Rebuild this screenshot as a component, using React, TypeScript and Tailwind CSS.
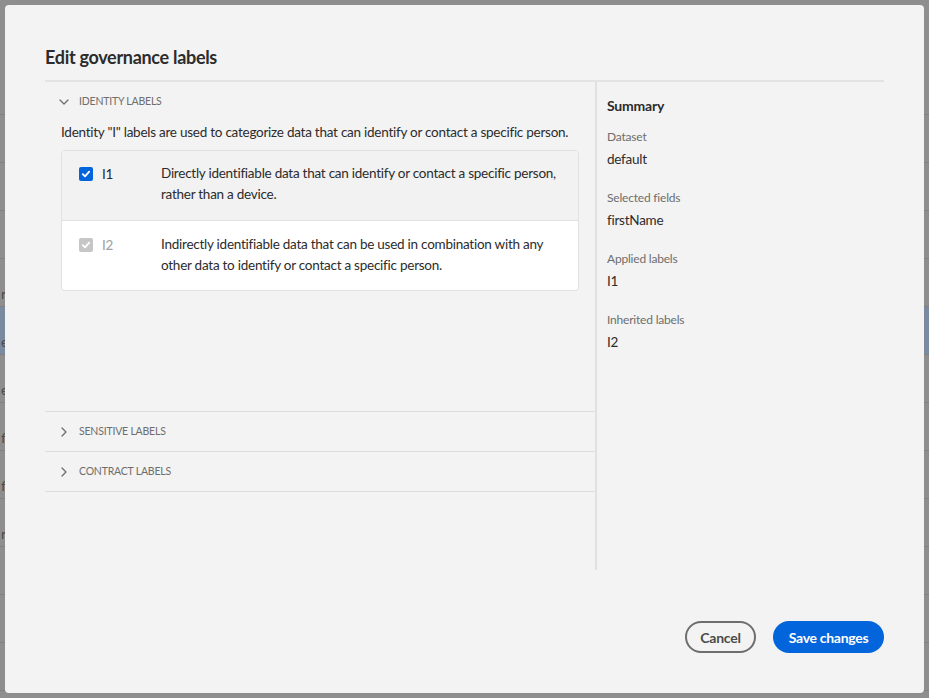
import React from 'react';

const bgRows = [
    { t: '', blue: false },
    { t: '', blue: false },
    { t: '', blue: false },
    { t: '', blue: false },
    { t: 'r', blue: false },
    { t: 'e', blue: true },
    { t: 'e', blue: false },
    { t: 'fi', blue: false },
    { t: 'fi', blue: false },
    { t: 'r', blue: false },
    { t: '', blue: false },
    { t: '', blue: false },
    { t: '', blue: false },
];

function ChevronDown() {
    return (
        <svg width="10" height="10" viewBox="0 0 10 10" fill="none">
            <path d="M1 3l4 4 4-4" stroke="#6e6e6e" strokeWidth="1.3" strokeLinecap="round" strokeLinejoin="round" />
        </svg>
    );
}

function ChevronRight() {
    return (
        <svg width="10" height="10" viewBox="0 0 10 10" fill="none">
            <path d="M3 1l4 4-4 4" stroke="#6e6e6e" strokeWidth="1.3" strokeLinecap="round" strokeLinejoin="round" />
        </svg>
    );
}

function Check({ disabled }: { disabled?: boolean }) {
    return (
        <span className={`flex h-[14px] w-[14px] shrink-0 items-center justify-center rounded-[2px] ${disabled ? 'bg-[#c6c6c6]' : 'bg-[#0265dc]'}`}>
            <svg width="10" height="10" viewBox="0 0 10 10" fill="none">
                <path d="M1.8 5.2l2.2 2.2 4.2-4.8" stroke="#fff" strokeWidth="1.8" strokeLinecap="round" strokeLinejoin="round" />
            </svg>
        </span>
    );
}

function SummaryItem({ label, value }: { label: string; value: string }) {
    return (
        <div className="mb-[18px]">
            <div className="text-[12px] leading-[20px] tracking-[-0.2px] text-[#6e6e6e]">{label}</div>
            <div className="mt-[1px] text-[13.5px] leading-[22px] tracking-[-0.25px] text-[#2c2c2c]">{value}</div>
        </div>
    );
}

function SectionHeader({ open, label }: { open?: boolean; label: string }) {
    return (
        <div className="flex h-[39px] items-center pl-[14px]">
            {open ? <ChevronDown /> : <ChevronRight />}
            <span className="ml-[10px] text-[10.5px] uppercase tracking-[-0.2px] text-[#6e6e6e]">{label}</span>
        </div>
    );
}

export default function App() {
    return (
        <div className="relative h-[698px] w-[929px] overflow-hidden bg-[#8e8e8e] font-['Lato',sans-serif]">
            {/* page behind the dialog */}
            <div className="h-[67px]" />
            {bgRows.map((r, i) => (
                <div
                    key={i}
                    className={`h-[48px] border-b border-[#808080] pt-[26px] pl-[1px] text-[14px] leading-[18px] text-[#4a4a4a] ${r.blue ? 'bg-[#7a8b9f]' : ''}`}
                >
                    {r.t}
                </div>
            ))}

            <div className="absolute left-[5px] top-[5px] flex h-[688px] w-[919px] flex-col rounded-[4px] bg-[#f3f3f3] px-[40px] pt-[40px] pb-[40px]">
                <h1 className="h-[24px] text-[18px] font-bold leading-[24px] tracking-[-0.3px] text-[#2c2c2c]">Edit governance labels</h1>
                <div className="mt-[11px] h-[2px] bg-[#e3e3e3]" />

                <div className="flex h-[488px]">
                    <div className="w-[550px]">
                        <div className="h-[330px] border-b border-[#dcdcdc]">
                            <SectionHeader open label="Identity labels" />
                            <div className="px-[16px] text-[13.5px] tracking-[-0.25px]">
                                <p className="leading-[22px] text-[#2c2c2c]">
                                    Identity "I" labels are used to categorize data that can identify or contact a specific person.
                                </p>
                                <div className="mt-[7px] overflow-hidden rounded-[4px] border border-[#e1e1e1] bg-white">
                                    <div className="flex h-[70px] border-b border-[#e1e1e1] bg-[#f2f2f2] pt-[12px] pl-[17px] pr-[18px]">
                                        <div className="mt-[4px]"><Check /></div>
                                        <span className="ml-[9px] w-[59px] shrink-0 leading-[22px] text-[#2c2c2c]">I1</span>
                                        <span className="leading-[21px] text-[#2c2c2c]">
                                            Directly identifiable data that can identify or contact a specific person, rather than a device.
                                        </span>
                                    </div>
                                    <div className="flex h-[69px] pt-[13px] pl-[17px] pr-[18px]">
                                        <div className="mt-[4px]"><Check disabled /></div>
                                        <span className="ml-[9px] w-[59px] shrink-0 leading-[22px] text-[#a0a0a0]">I2</span>
                                        <span className="leading-[21px] text-[#2c2c2c]">
                                            Indirectly identifiable data that can be used in combination with any other data to identify or contact a specific person.
                                        </span>
                                    </div>
                                </div>
                            </div>
                        </div>
                        <div className="border-b border-[#dcdcdc]">
                            <SectionHeader label="Sensitive labels" />
                        </div>
                        <div className="border-b border-[#dcdcdc]">
                            <SectionHeader label="Contract labels" />
                        </div>
                    </div>

                    <div className="w-[2px] bg-[#e1e1e1]" />

                    <div className="flex-1 pl-[10px] pt-[14px]">
                        <div className="mb-[11px] text-[14px] font-bold leading-[20px] tracking-[-0.2px] text-[#2c2c2c]">Summary</div>
                        <SummaryItem label="Dataset" value="default" />
                        <SummaryItem label="Selected fields" value="firstName" />
                        <SummaryItem label="Applied labels" value="I1" />
                        <SummaryItem label="Inherited labels" value="I2" />
                    </div>
                </div>

                <div className="mt-auto flex justify-end gap-[17px]">
                    <button className="h-[32px] w-[71px] rounded-full border-2 border-[#6e6e6e] text-[14px] font-bold tracking-[-0.2px] text-[#4b4b4b]">
                        Cancel
                    </button>
                    <button className="h-[32px] w-[111px] rounded-full bg-[#0265dc] text-[14px] font-bold tracking-[-0.3px] text-white">
                        Save changes
                    </button>
                </div>
            </div>
        </div>
    );
}
